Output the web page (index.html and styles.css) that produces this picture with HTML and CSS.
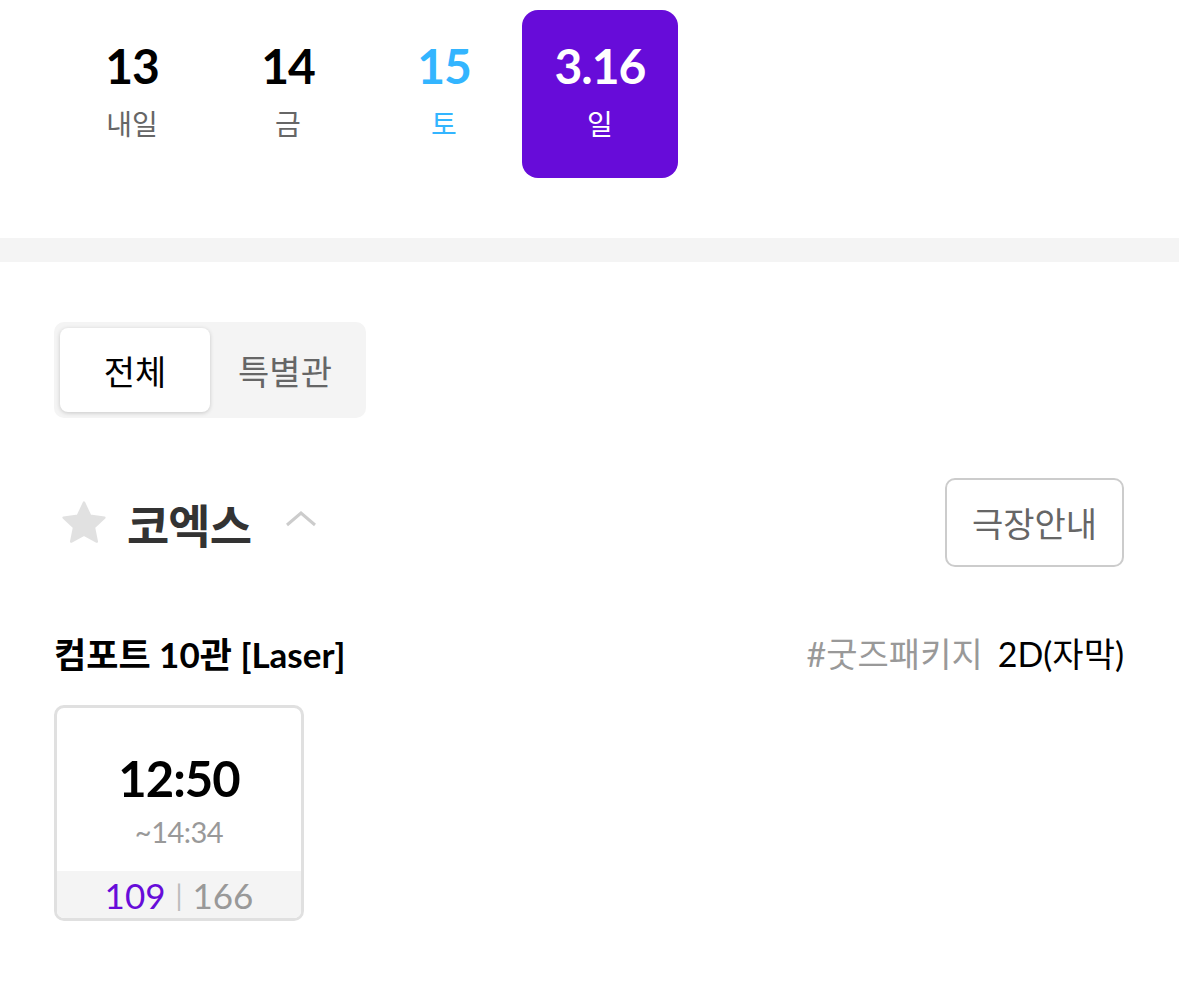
FILE: index.html
```html
<!DOCTYPE html>
<html lang="ko">
<head>
<meta charset="utf-8">
<link rel="stylesheet" href="styles.css">
</head>
<body>
<div class="dates">
  <div class="date"><span class="num">13</span><span class="day">내일</span></div>
  <div class="date"><span class="num">14</span><span class="day">금</span></div>
  <div class="date sat"><span class="num">15</span><span class="day">토</span></div>
  <div class="date active"><span class="num">3.16</span><span class="day">일</span></div>
</div>
<div class="divider"></div>
<div class="content">
  <div class="tabs">
    <div class="tab on">전체</div>
    <div class="tab">특별관</div>
  </div>
  <div class="theater">
    <div class="theater-left">
      <svg class="star" width="48" height="48" viewBox="0 0 24 24"><path d="M12 1.8l3.1 6.6 7.1.9-5.2 4.9 1.4 7.1L12 17.8l-6.4 3.5 1.4-7.1-5.2-4.9 7.1-.9z" fill="#e1e1e1" stroke="#e1e1e1" stroke-width="1.2" stroke-linejoin="round"/></svg>
      <span class="theater-name">코엑스</span>
      <svg class="chev" width="34" height="20" viewBox="0 0 34 20"><path d="M3 16L17 4l14 12" fill="none" stroke="#cccccc" stroke-width="3"/></svg>
    </div>
    <div class="info-btn">극장안내</div>
  </div>
  <div class="hall">
    <div class="hall-name">컴포트 10관 [Laser]</div>
    <div class="hall-tags"><span class="tag">#굿즈패키지</span><span class="fmt">2D(자막)</span></div>
  </div>
  <div class="times">
    <div class="slot">
      <div class="slot-top">
        <div class="start">12:50</div>
        <div class="end">~14:34</div>
      </div>
      <div class="seats"><span class="left">109</span><span class="bar">|</span><span class="total">166</span></div>
    </div>
  </div>
</div>
</body>
</html>
```
FILE: styles.css
```css
* { box-sizing: border-box; }
body {
  margin: 0;
  background: #fff;
  font-family: Lato, "Noto Sans CJK KR", sans-serif;
  color: #000;
}
.dates {
  display: flex;
  padding: 10px 0 0 54px;
  height: 238px;
}
.date {
  width: 156px;
  height: 168px;
  display: flex;
  flex-direction: column;
  align-items: center;
  padding-top: 27px;
  border-radius: 16px;
}
.num {
  font-size: 48px;
  font-weight: 700;
  line-height: 58px;
  letter-spacing: -1px;
}
.day {
  font-size: 28px;
  line-height: 38px;
  color: #666;
  margin-top: 10px;
}
.sat .num, .sat .day { color: #33b5ff; }
.active { background: #670cd9; }
.active .num, .active .day { color: #fff; }
.divider {
  height: 24px;
  background: #f4f4f4;
}
.content {
  padding: 60px 55px 0 54px;
}
.tabs {
  display: inline-flex;
  background: #f4f4f4;
  border-radius: 10px;
  padding: 6px;
  width: 312px;
  height: 96px;
}
.tab {
  width: 151px;
  display: flex;
  align-items: center;
  justify-content: center;
  font-size: 34px;
  color: #666;
  border-radius: 8px;
}
.tab.on {
  background: #fff;
  color: #000;
  box-shadow: 0 1px 4px rgba(0,0,0,0.18);
}
.theater {
  display: flex;
  justify-content: space-between;
  align-items: center;
  margin-top: 60px;
}
.theater-left {
  display: flex;
  align-items: center;
}
.star { margin-left: 6px; }
.theater-name {
  font-family: "Noto Sans CJK KR", sans-serif;
  font-weight: 700;
  font-size: 46px;
  color: #333;
  margin-left: 19px;
  letter-spacing: -1px;
}
.chev { margin-left: 33px; margin-top: -8px; }
.info-btn {
  width: 179px;
  height: 89px;
  border: 2px solid #cccccc;
  border-radius: 10px;
  display: flex;
  align-items: center;
  justify-content: center;
  font-size: 34px;
  color: #666;
}
.hall {
  display: flex;
  justify-content: space-between;
  align-items: center;
  margin-top: 60px;
  height: 50px;
}
.hall-name {
  font-size: 35px;
  font-weight: 700;
}
.hall-tags { font-size: 34px; }
.tag { color: #999; margin-right: 15px; }
.fmt { color: #000; }
.times {
  margin-top: 28px;
  display: flex;
}
.slot {
  width: 250px;
  height: 216px;
  border: 3px solid #e0e0e0;
  border-radius: 10px;
  overflow: hidden;
  display: flex;
  flex-direction: column;
}
.slot-top {
  flex: 1;
  display: flex;
  flex-direction: column;
  align-items: center;
  padding-top: 42px;
}
.start {
  font-size: 49px;
  font-weight: 700;
  line-height: 56px;
  letter-spacing: -1px;
}
.end {
  font-size: 29px;
  color: #999;
  line-height: 32px;
  margin-top: 10px;
  letter-spacing: -0.5px;
}
.seats {
  height: 47px;
  background: #f4f4f4;
  display: flex;
  align-items: center;
  justify-content: center;
  font-size: 35px;
  font-weight: 400;
  color: #999;
}
.left { color: #670cd9; }
.bar { font-size: 28px; margin: 0 10px; color: #bbb; }
```
